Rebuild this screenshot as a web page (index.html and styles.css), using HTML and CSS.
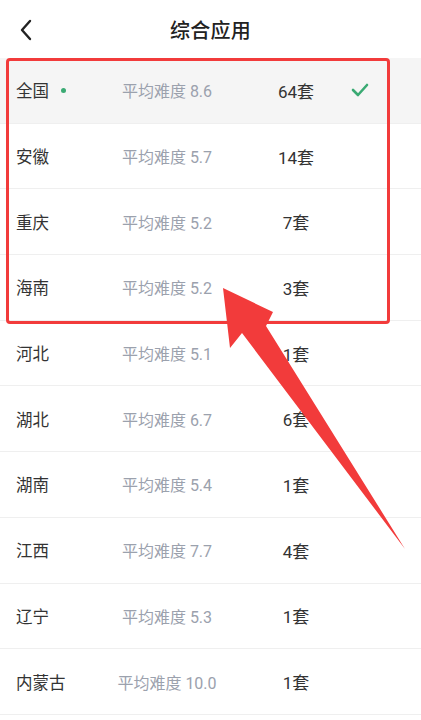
FILE: index.html
```html
<!DOCTYPE html>
<html lang="zh">
<head>
<meta charset="utf-8">
<link rel="stylesheet" href="styles.css">
</head>
<body>
<div class="page">
  <header class="bar">
    <svg class="back" width="14" height="22" viewBox="0 0 14 22"><path d="M11 2 L3 11 L11 20" fill="none" stroke="#222" stroke-width="2.4" stroke-linecap="round" stroke-linejoin="round"/></svg>
    <h1 class="title">综合应用</h1>
  </header>
  <ul class="list">
    <li class="row active"><span class="name">全国<i class="dot"></i></span><span class="diff">平均难度 8.6</span><span class="count">64套</span><span class="check"><svg width="18" height="14" viewBox="0 0 18 14"><path d="M2 7 L7 12 L16 2" fill="none" stroke="#3aaa73" stroke-width="2.6" stroke-linecap="round" stroke-linejoin="round"/></svg></span></li>
    <li class="row"><span class="name">安徽</span><span class="diff">平均难度 5.7</span><span class="count">14套</span><span class="check"></span></li>
    <li class="row"><span class="name">重庆</span><span class="diff">平均难度 5.2</span><span class="count">7套</span><span class="check"></span></li>
    <li class="row"><span class="name">海南</span><span class="diff">平均难度 5.2</span><span class="count">3套</span><span class="check"></span></li>
    <li class="row"><span class="name">河北</span><span class="diff">平均难度 5.1</span><span class="count">1套</span><span class="check"></span></li>
    <li class="row"><span class="name">湖北</span><span class="diff">平均难度 6.7</span><span class="count">6套</span><span class="check"></span></li>
    <li class="row"><span class="name">湖南</span><span class="diff">平均难度 5.4</span><span class="count">1套</span><span class="check"></span></li>
    <li class="row"><span class="name">江西</span><span class="diff">平均难度 7.7</span><span class="count">4套</span><span class="check"></span></li>
    <li class="row"><span class="name">辽宁</span><span class="diff">平均难度 5.3</span><span class="count">1套</span><span class="check"></span></li>
    <li class="row"><span class="name">内蒙古</span><span class="diff">平均难度 10.0</span><span class="count">1套</span><span class="check"></span></li>
  </ul>
  <div class="highlight"></div>
  <svg class="arrow" width="421" height="720" viewBox="0 0 421 720"><polygon points="223,288 273,312 266,326 405,549 242,333 230,348" fill="#f23b3b"/></svg>
</div>
</body>
</html>
```
FILE: styles.css
```css
* { box-sizing: border-box; }
html, body { margin: 0; padding: 0; background: #fff; }
.page {
  position: relative;
  width: 421px;
  height: 720px;
  overflow: hidden;
  font-family: Roboto, "Noto Sans CJK SC", sans-serif;
  color: #333;
}
.bar {
  height: 58px;
  display: flex;
  align-items: center;
  justify-content: center;
  position: relative;
}
.back { position: absolute; left: 19px; top: 19px; }
.title {
  margin: 0;
  font-size: 20px;
  font-weight: 500;
  color: #222;
  letter-spacing: 0.3px;
}
.list { list-style: none; margin: 0; padding: 0; }
.row {
  height: 65.7px;
  display: grid;
  grid-template-columns: 100px 134px 114px 24px;
  align-items: center;
  border-bottom: 1px solid #efefef;
}
.row.active { background: #f5f5f5; }
.name {
  padding-left: 16px;
  font-size: 16.5px;
  color: #333;
  display: flex;
  align-items: center;
}
.dot {
  width: 5px; height: 5px;
  border-radius: 50%;
  background: #3aaa73;
  margin-left: 12px;
}
.diff {
  text-align: center;
  font-size: 16px;
  color: #9ba1ad;
}
.count {
  text-align: center;
  padding-left: 10px;
  font-size: 17px;
  color: #333;
}
.check { display: flex; justify-content: center; }
.highlight {
  position: absolute;
  left: 6px;
  top: 58px;
  width: 384px;
  height: 266px;
  border: 3px solid #f23b3b;
  border-radius: 4px;
}
.arrow { position: absolute; left: 0; top: 0; }
```
